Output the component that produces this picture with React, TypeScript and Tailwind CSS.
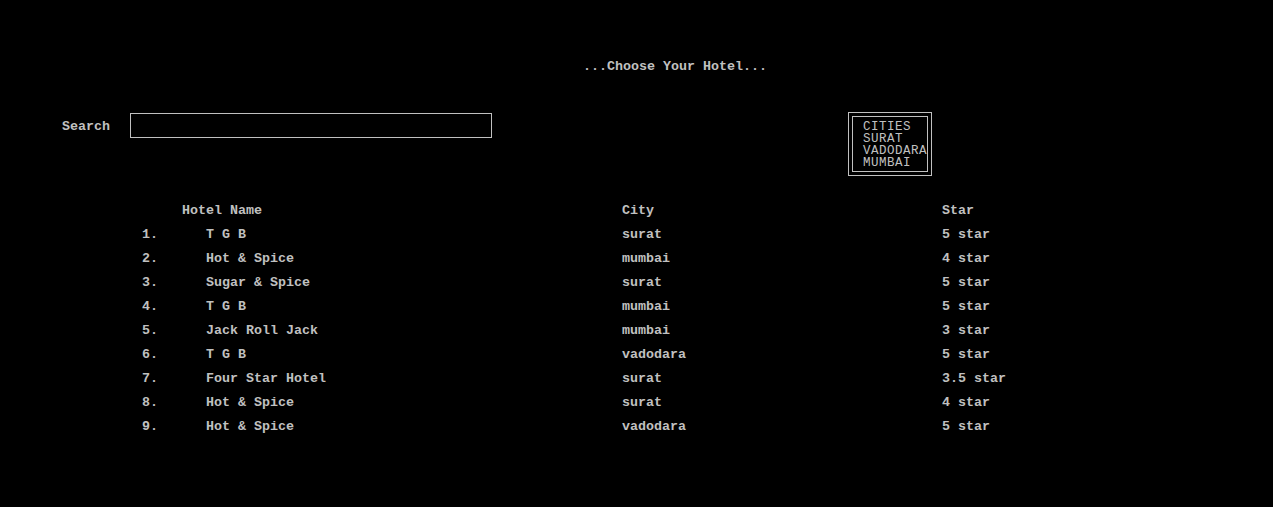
const hotels = [
  { name: 'T G B', city: 'surat', star: '5 star' },
  { name: 'Hot & Spice', city: 'mumbai', star: '4 star' },
  { name: 'Sugar & Spice', city: 'surat', star: '5 star' },
  { name: 'T G B', city: 'mumbai', star: '5 star' },
  { name: 'Jack Roll Jack', city: 'mumbai', star: '3 star' },
  { name: 'T G B', city: 'vadodara', star: '5 star' },
  { name: 'Four Star Hotel', city: 'surat', star: '3.5 star' },
  { name: 'Hot & Spice', city: 'surat', star: '4 star' },
  { name: 'Hot & Spice', city: 'vadodara', star: '5 star' },
]

export default function App() {
  return (
    <div className="w-[1273px] h-[507px] overflow-hidden bg-black text-[#c0c0c0] font-['Liberation_Mono',monospace] text-[13.33px] font-bold whitespace-pre">
      {/* title */}
      <div className="pt-[59px] pl-[583px] leading-[16px]">...Choose Your Hotel...</div>

      {/* search + cities */}
      <div className="flex items-start mt-[37px]">
        <div className="flex items-center mt-[1px] pl-[62px] gap-[20px]">
          <span className="leading-[16px] pt-[2px]">Search</span>
          <div className="w-[362px] h-[25px] border border-[#c0c0c0]" />
        </div>
        <div className="ml-[356px] w-[84px] h-[64px] border border-[#c0c0c0] p-[3px]">
          <div className="w-[76px] h-[56px] border border-[#c0c0c0] pl-[10px] pt-[4px] font-normal text-[12.5px] tracking-[0.5px] leading-[12px]">
            <div className="h-[12px]">CITIES</div>
            <div className="h-[12px]">SURAT</div>
            <div className="h-[12px]">VADODARA</div>
            <div className="h-[12px]">MUMBAI</div>
          </div>
        </div>
      </div>

      {/* table */}
      <div className="mt-[23px] leading-[24px]">
        <div className="flex pl-[182px]">
          <span className="w-[440px]">Hotel Name</span>
          <span className="w-[320px]">City</span>
          <span>Star</span>
        </div>
        {hotels.map((h, i) => (
          <div key={i} className="flex pl-[142px]">
            <span className="w-[64px]">{i + 1}.</span>
            <span className="w-[416px]">{h.name}</span>
            <span className="w-[320px]">{h.city}</span>
            <span>{h.star}</span>
          </div>
        ))}
      </div>
    </div>
  )
}
